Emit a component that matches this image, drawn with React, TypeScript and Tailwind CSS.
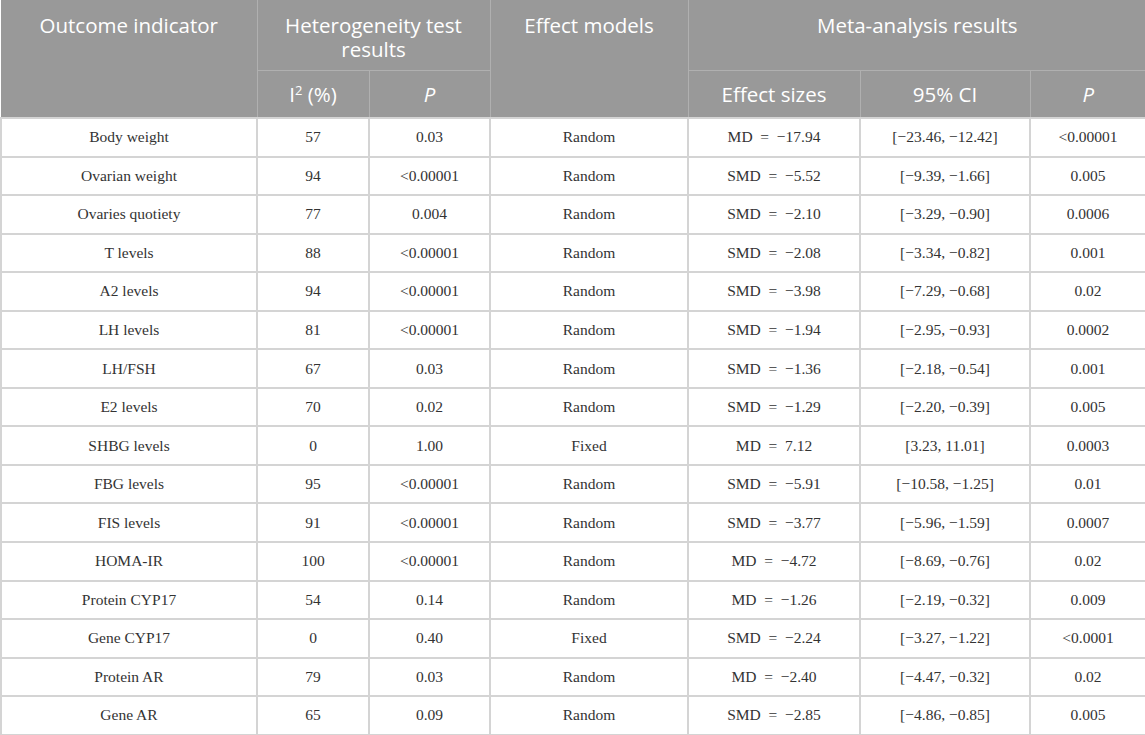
const rows: string[][] = [
  ["Body weight", "57", "0.03", "Random", "MD = −17.94", "[−23.46, −12.42]", "<0.00001"],
  ["Ovarian weight", "94", "<0.00001", "Random", "SMD = −5.52", "[−9.39, −1.66]", "0.005"],
  ["Ovaries quotiety", "77", "0.004", "Random", "SMD = −2.10", "[−3.29, −0.90]", "0.0006"],
  ["T levels", "88", "<0.00001", "Random", "SMD = −2.08", "[−3.34, −0.82]", "0.001"],
  ["A2 levels", "94", "<0.00001", "Random", "SMD = −3.98", "[−7.29, −0.68]", "0.02"],
  ["LH levels", "81", "<0.00001", "Random", "SMD = −1.94", "[−2.95, −0.93]", "0.0002"],
  ["LH/FSH", "67", "0.03", "Random", "SMD = −1.36", "[−2.18, −0.54]", "0.001"],
  ["E2 levels", "70", "0.02", "Random", "SMD = −1.29", "[−2.20, −0.39]", "0.005"],
  ["SHBG levels", "0", "1.00", "Fixed", "MD = 7.12", "[3.23, 11.01]", "0.0003"],
  ["FBG levels", "95", "<0.00001", "Random", "SMD = −5.91", "[−10.58, −1.25]", "0.01"],
  ["FIS levels", "91", "<0.00001", "Random", "SMD = −3.77", "[−5.96, −1.59]", "0.0007"],
  ["HOMA-IR", "100", "<0.00001", "Random", "MD = −4.72", "[−8.69, −0.76]", "0.02"],
  ["Protein CYP17", "54", "0.14", "Random", "MD = −1.26", "[−2.19, −0.32]", "0.009"],
  ["Gene CYP17", "0", "0.40", "Fixed", "SMD = −2.24", "[−3.27, −1.22]", "<0.0001"],
  ["Protein AR", "79", "0.03", "Random", "MD = −2.40", "[−4.47, −0.32]", "0.02"],
  ["Gene AR", "65", "0.09", "Random", "SMD = −2.85", "[−4.86, −0.85]", "0.005"],
];

const widths = ["w-[256px]", "w-[112px]", "w-[121px]", "w-[198px]", "w-[172px]", "w-[170px]", "w-[116px]"];

const th = "border border-[#b0b0b0] bg-[#999999] text-center font-normal text-white";

export default function App() {
  return (
    <div className="h-[735px] w-[1145px] overflow-hidden bg-white">
      <table
        className="w-[1145px] table-fixed border-collapse text-[20.5px] leading-[24px]"
        style={{ fontFamily: '"Open Sans", "Noto Sans", sans-serif' }}
      >
        <colgroup>
          {widths.map((w) => (
            <col key={w} className={w} />
          ))}
        </colgroup>
        <thead>
          <tr className="h-[70px]">
            <th rowSpan={2} className={`${th} border-t-0 border-l-0 px-2 pt-[13px] align-top`}>
              Outcome indicator
            </th>
            <th colSpan={2} className={`${th} border-t-0 px-2 pt-[13px] align-top`}>
              Heterogeneity test results
            </th>
            <th rowSpan={2} className={`${th} border-t-0 px-2 pt-[13px] align-top`}>
              Effect models
            </th>
            <th colSpan={3} className={`${th} border-t-0 border-r-0 px-2 pt-[13px] align-top`}>
              Meta-analysis results
            </th>
          </tr>
          <tr className="h-[48px]">
            <th className={`${th} align-middle`}>
              I<sup className="text-[13px]">2</sup> (%)
            </th>
            <th className={`${th} align-middle italic`}>P</th>
            <th className={`${th} align-middle`}>Effect sizes</th>
            <th className={`${th} align-middle`}>95% CI</th>
            <th className={`${th} border-r-0 align-middle italic`}>P</th>
          </tr>
        </thead>
        <tbody
          className="text-[15.5px] text-[#333333]"
          style={{ fontFamily: '"Liberation Serif", "Times New Roman", serif' }}
        >
          {rows.map((r) => (
            <tr key={r[0]} className="h-[38.56px]">
              {r.map((c, i) => (
                <td
                  key={i}
                  className="border-2 border-[#d4d4d4] px-2 text-center align-middle whitespace-pre"
                >
                  {c.replace(" = ", "  =  ")}
                </td>
              ))}
            </tr>
          ))}
        </tbody>
      </table>
    </div>
  );
}
